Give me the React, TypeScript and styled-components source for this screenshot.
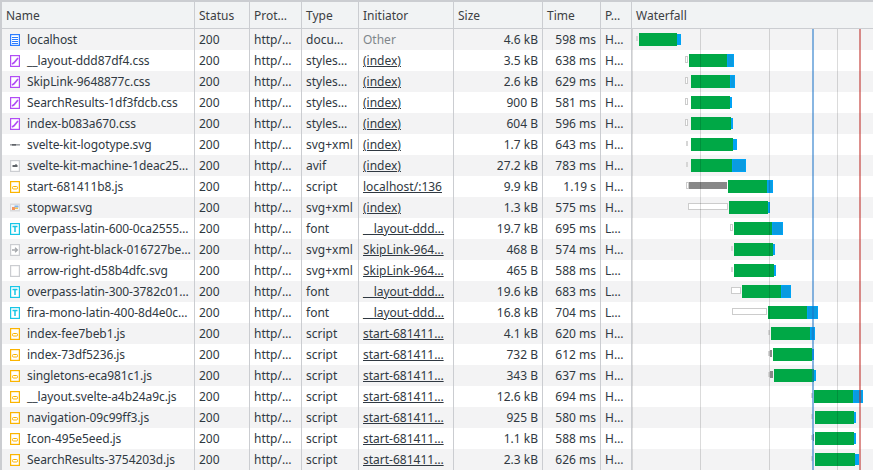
import React from "react";
import styled, { createGlobalStyle } from "styled-components";

const Global = createGlobalStyle`
  html, body { margin: 0; padding: 0; background: #fff; overflow: hidden; }
  body { font-family: "Noto Sans", "Liberation Sans", sans-serif; font-size: 12px; color: #303942; }
`;

const COLS = "193px 55px 52px 57px 95px 89px 58px 31px 1fr";

const Panel = styled.div`
  width: 873px;
  height: 470px;
  box-sizing: border-box;
  border-top: 2px solid #cbcdd1;
  border-left: 2px solid #cbcdd1;
  overflow: hidden;
`;

const HeaderRow = styled.div`
  display: grid;
  grid-template-columns: ${COLS};
  height: 27px;
  box-sizing: border-box;
  background: #f1f3f4;
  border-bottom: 1px solid #cbcdd1;
`;

const HeaderCell = styled.div`
  display: flex;
  align-items: center;
  padding-left: 4px;
  border-right: 1px solid #cbcdd1;
  white-space: nowrap;
  overflow: hidden;
  color: #3c4043;
  &:last-child { border-right: none; }
`;

const Body = styled.div`
  position: relative;
`;

const Row = styled.div<{ $odd: boolean }>`
  display: grid;
  grid-template-columns: ${COLS};
  height: 21px;
  background: ${(p) => (p.$odd ? "#f3f3f4" : "#ffffff")};
`;

const Cell = styled.div<{ $right?: boolean }>`
  display: flex;
  align-items: center;
  justify-content: ${(p) => (p.$right ? "flex-end" : "flex-start")};
  padding: 0 ${(p) => (p.$right ? "4px" : "0")} 0 ${(p) => (p.$right ? "0" : "4px")};
  border-right: 1px solid #cbcdd1;
  white-space: nowrap;
  overflow: hidden;
`;

const NameCell = styled(Cell)`
  gap: 7px;
  padding-left: 8px;
  letter-spacing: -0.08px;
`;

const FileIcon = styled.svg`
  flex: none;
  width: 10px;
  height: 12px;
`;

const InitiatorLink = styled.span`
  text-decoration: underline;
  color: #303942;
`;

const InitiatorPlain = styled.span`
  color: #80868b;
`;

const WaterfallCell = styled.div`
  min-width: 0;
`;

const Chart = styled.svg`
  position: absolute;
  left: 630px;
  top: 0;
  width: 241px;
  height: 441px;
  pointer-events: none;
`;

type Kind = "doc" | "css" | "logo" | "machine" | "js" | "war" | "font" | "arrowb" | "blank";

function Icon({ kind }: { kind: Kind }) {
  const frame = (c: string) => <rect x="0.6" y="0.6" width="8.8" height="10.8" fill="#fff" stroke={c} strokeWidth="1.2" />;
  let content: React.ReactNode = null;
  switch (kind) {
    case "doc":
      content = (
        <>
          {frame("#2b7cff")}
          <path d="M2 3.5h6M2 5.5h6M2 7.5h6M2 9.5h6" stroke="#2b7cff" strokeWidth="1" />
        </>
      );
      break;
    case "css":
      content = (
        <>
          {frame("#b14cf5")}
          <path d="M2 9 L4 7.8 L8 3" stroke="#b14cf5" strokeWidth="1.6" fill="none" />
        </>
      );
      break;
    case "logo":
      content = (
        <>
          <rect x="0" y="5" width="10" height="1.6" fill="#a0a3a7" />
          <rect x="2" y="5" width="4" height="1.6" fill="#5f6368" />
        </>
      );
      break;
    case "machine":
      content = (
        <>
          {frame("#cbcdd1")}
          <rect x="2.5" y="5" width="5" height="2" fill="#5f6368" />
          <rect x="5" y="4" width="2" height="1" fill="#a0a3a7" />
        </>
      );
      break;
    case "js":
      content = (
        <>
          {frame("#fbb400")}
          <rect x="2.5" y="5.5" width="5" height="2.5" rx="1" fill="#fff" stroke="#fbb400" />
        </>
      );
      break;
    case "war":
      content = (
        <>
          <rect x="0" y="1.5" width="10" height="8" fill="#d9dadc" />
          <rect x="1" y="3" width="8" height="5" fill="#f3f3f4" />
          <rect x="2" y="5" width="3" height="3" fill="#f4945c" />
          <rect x="4.5" y="3.5" width="4" height="2" fill="#7fb2ea" />
          <rect x="5" y="5.5" width="3" height="1.5" fill="#f3c14f" />
        </>
      );
      break;
    case "font":
      content = (
        <>
          {frame("#18c6e6")}
          <path d="M2.5 3.5h5M5 3.5v5.5" stroke="#18c6e6" strokeWidth="1.5" fill="none" />
        </>
      );
      break;
    case "arrowb":
      content = (
        <>
          {frame("#cbcdd1")}
          <path d="M2 6h5M5 3.8 7.4 6 5 8.2" stroke="#a5a8ac" strokeWidth="1.3" fill="none" />
        </>
      );
      break;
    case "blank":
      content = frame("#cbcdd1");
      break;
  }
  return <FileIcon viewBox="0 0 10 12">{content}</FileIcon>;
}

type Seg = { wait?: [number, number]; waitOutline?: boolean; dark?: [number, number]; g: [number, number]; b: [number, number] };

const rows: {
  icon: Kind; name: string; type: string; init: string; plain?: boolean; size: string; time: string; p: string; seg: Seg;
}[] = [
  { icon: "doc", name: "localhost", type: "docu…", init: "Other", plain: true, size: "4.6 kB", time: "598 ms", p: "H…", seg: { wait: [636, 638], g: [639, 677], b: [677, 681] } },
  { icon: "css", name: "__layout-ddd87df4.css", type: "styles…", init: "(index)", size: "3.5 kB", time: "638 ms", p: "H…", seg: { wait: [685, 688], waitOutline: true, g: [689, 727], b: [727, 734] } },
  { icon: "css", name: "SkipLink-9648877c.css", type: "styles…", init: "(index)", size: "2.6 kB", time: "629 ms", p: "H…", seg: { wait: [685, 688], waitOutline: true, g: [691, 730], b: [730, 735] } },
  { icon: "css", name: "SearchResults-1df3fdcb.css", type: "styles…", init: "(index)", size: "900 B", time: "581 ms", p: "H…", seg: { wait: [685, 688], waitOutline: true, g: [691, 730], b: [730, 732] } },
  { icon: "css", name: "index-b083a670.css", type: "styles…", init: "(index)", size: "604 B", time: "596 ms", p: "H…", seg: { wait: [685, 688], waitOutline: true, g: [691, 731], b: [731, 733] } },
  { icon: "logo", name: "svelte-kit-logotype.svg", type: "svg+xml", init: "(index)", size: "1.7 kB", time: "643 ms", p: "H…", seg: { wait: [686, 688], g: [691, 733], b: [733, 737] } },
  { icon: "machine", name: "svelte-kit-machine-1deac25…", type: "avif", init: "(index)", size: "27.2 kB", time: "783 ms", p: "H…", seg: { wait: [686, 688], g: [691, 732], b: [732, 746] } },
  { icon: "js", name: "start-681411b8.js", type: "script", init: "localhost/:136", size: "9.9 kB", time: "1.19 s", p: "H…", seg: { wait: [686, 689], waitOutline: true, dark: [689, 727], g: [728, 767], b: [767, 773] } },
  { icon: "war", name: "stopwar.svg", type: "svg+xml", init: "(index)", size: "1.3 kB", time: "575 ms", p: "H…", seg: { wait: [688, 728], waitOutline: true, g: [729, 768], b: [768, 770] } },
  { icon: "font", name: "overpass-latin-600-0ca2555…", type: "font", init: "__layout-ddd…", size: "19.7 kB", time: "695 ms", p: "L…", seg: { wait: [730, 733], waitOutline: true, g: [734, 772], b: [772, 783] } },
  { icon: "arrowb", name: "arrow-right-black-016727be…", type: "svg+xml", init: "SkipLink-964…", size: "468 B", time: "574 ms", p: "H…", seg: { wait: [731, 733], g: [734, 773], b: [773, 775] } },
  { icon: "blank", name: "arrow-right-d58b4dfc.svg", type: "svg+xml", init: "SkipLink-964…", size: "465 B", time: "588 ms", p: "L…", seg: { wait: [731, 733], g: [734, 774], b: [774, 776] } },
  { icon: "font", name: "overpass-latin-300-3782c01…", type: "font", init: "__layout-ddd…", size: "19.6 kB", time: "683 ms", p: "L…", seg: { wait: [731, 741], waitOutline: true, g: [742, 781], b: [781, 791] } },
  { icon: "font", name: "fira-mono-latin-400-8d4e0c…", type: "font", init: "__layout-ddd…", size: "16.8 kB", time: "704 ms", p: "L…", seg: { wait: [732, 767], waitOutline: true, g: [768, 807], b: [807, 818] } },
  { icon: "js", name: "index-fee7beb1.js", type: "script", init: "start-681411…", size: "4.1 kB", time: "620 ms", p: "H…", seg: { wait: [768, 770], g: [771, 810], b: [810, 815] } },
  { icon: "js", name: "index-73df5236.js", type: "script", init: "start-681411…", size: "732 B", time: "612 ms", p: "H…", seg: { wait: [768, 770], dark: [770, 772], g: [773, 812], b: [812, 814] } },
  { icon: "js", name: "singletons-eca981c1.js", type: "script", init: "start-681411…", size: "343 B", time: "637 ms", p: "H…", seg: { wait: [768, 770], dark: [770, 773], g: [774, 814], b: [814, 816] } },
  { icon: "js", name: "__layout.svelte-a4b24a9c.js", type: "script", init: "start-681411…", size: "12.6 kB", time: "694 ms", p: "H…", seg: { wait: [811, 813], g: [814, 853], b: [853, 863] } },
  { icon: "js", name: "navigation-09c99ff3.js", type: "script", init: "start-681411…", size: "925 B", time: "580 ms", p: "H…", seg: { wait: [811, 813], g: [815, 854], b: [854, 856] } },
  { icon: "js", name: "Icon-495e5eed.js", type: "script", init: "start-681411…", size: "1.1 kB", time: "588 ms", p: "H…", seg: { wait: [811, 813], dark: [813, 814], g: [815, 854], b: [854, 856] } },
  { icon: "js", name: "SearchResults-3754203d.js", type: "script", init: "start-681411…", size: "2.3 kB", time: "626 ms", p: "H…", seg: { wait: [811, 813], g: [815, 855], b: [855, 859] } },
];

const headers = ["Name", "Status", "Prot…", "Type", "Initiator", "Size", "Time", "P…", "Waterfall"];

function Waterfall() {
  return (
    <Chart viewBox="632 0 241 441">
      {rows.map((r, i) => {
        const top = i * 21;
        const s = r.seg;
        const bw = s.b[1] - s.b[0];
        return (
          <g key={r.name}>
            {s.wait &&
              (s.waitOutline ? (
                <rect x={s.wait[0] + 0.5} y={top + 6.5} width={s.wait[1] - s.wait[0] - 1} height={6} fill="#fff" stroke="#cccccc" />
              ) : (
                <rect x={s.wait[0]} y={top + 7} width={s.wait[1] - s.wait[0]} height={5} fill="#d6d6d6" />
              ))}
            {s.dark && <rect x={s.dark[0]} y={top + 6} width={s.dark[1] - s.dark[0]} height={7} fill="#888888" />}
            <rect x={s.g[0]} y={top + 4} width={s.g[1] - s.g[0]} height={13} fill="#00a846" />
            {bw > 4 ? (
              <rect x={s.b[0] + 0.5} y={top + 4.5} width={bw - 1} height={12} fill="#0a9be0" stroke="#00a3f5" />
            ) : (
              <rect x={s.b[0]} y={top + 5} width={bw} height={11} fill="#00a3f5" />
            )}
          </g>
        );
      })}
      <rect x="632" y="0" width="1" height="441" fill="rgba(0,0,0,0.12)" />
      <rect x="700" y="0" width="1" height="441" fill="rgba(0,0,0,0.14)" />
      <rect x="769" y="0" width="1" height="441" fill="rgba(0,0,0,0.14)" />
      <rect x="837" y="0" width="1" height="441" fill="rgba(0,0,0,0.14)" />
      <rect x="812" y="0" width="2" height="441" fill="rgba(26,115,200,0.52)" />
      <rect x="859" y="0" width="2" height="441" fill="rgba(190,40,35,0.52)" />
    </Chart>
  );
}

export default function App() {
  return (
    <>
      <Global />
      <Panel>
        <HeaderRow>
          {headers.map((h) => (
            <HeaderCell key={h}>{h}</HeaderCell>
          ))}
        </HeaderRow>
        <Body>
          {rows.map((r, i) => (
            <Row key={r.name} $odd={i % 2 === 0}>
              <NameCell>
                <Icon kind={r.icon} />
                <span>{r.name}</span>
              </NameCell>
              <Cell>200</Cell>
              <Cell>http/…</Cell>
              <Cell>{r.type}</Cell>
              <Cell>{r.plain ? <InitiatorPlain>{r.init}</InitiatorPlain> : <InitiatorLink>{r.init}</InitiatorLink>}</Cell>
              <Cell $right>{r.size}</Cell>
              <Cell $right>{r.time}</Cell>
              <Cell>{r.p}</Cell>
              <WaterfallCell />
            </Row>
          ))}
          <Waterfall />
        </Body>
      </Panel>
    </>
  );
}
